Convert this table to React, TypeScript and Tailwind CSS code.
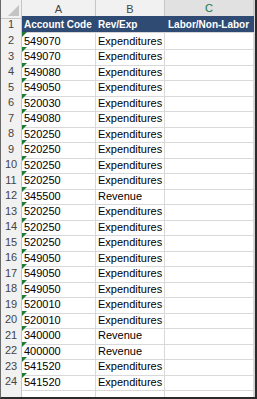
const rows: [string, string][] = [
  ['549070', 'Expenditures'],
  ['549070', 'Expenditures'],
  ['549080', 'Expenditures'],
  ['549050', 'Expenditures'],
  ['520030', 'Expenditures'],
  ['549080', 'Expenditures'],
  ['520250', 'Expenditures'],
  ['520250', 'Expenditures'],
  ['520250', 'Expenditures'],
  ['520250', 'Expenditures'],
  ['345500', 'Revenue'],
  ['520250', 'Expenditures'],
  ['520250', 'Expenditures'],
  ['520250', 'Expenditures'],
  ['549050', 'Expenditures'],
  ['549050', 'Expenditures'],
  ['549050', 'Expenditures'],
  ['520010', 'Expenditures'],
  ['520010', 'Expenditures'],
  ['340000', 'Revenue'],
  ['400000', 'Revenue'],
  ['541520', 'Expenditures'],
  ['541520', 'Expenditures'],
];

const cols = 'grid grid-cols-[21px_74px_69px_89px_1px]';

function RowNum({ n }: { n: number | string }) {
  return (
    <div className="flex items-center justify-center pt-px bg-[#f1f1f1] border-r border-b border-[#c6c6c6] text-[#444] leading-none">
      {n}
    </div>
  );
}

export default function App() {
  return (
    <div
      className="w-[257px] h-[399px] overflow-hidden bg-white border-l border-l-[#6a6a6a] border-r-2 border-b-2 border-[#2b2b2b] flex flex-col text-[11px] text-black"
      style={{ fontFamily: '"Liberation Sans", Arial, sans-serif' }}
    >
      {/* column letters */}
      <div className={`${cols} h-[16px] shrink-0`}>
        <div className="relative bg-[#f1f1f1] border-r border-b border-[#c6c6c6]">
          <svg className="absolute right-[2px] bottom-[2px]" width="11" height="11" viewBox="0 0 11 11">
            <polygon points="11,0 11,11 0,11" fill="#c4c4c4" />
          </svg>
        </div>
        <div className="flex items-center justify-center bg-[#f1f1f1] border-r border-b border-[#c6c6c6] text-[#444]">A</div>
        <div className="flex items-center justify-center bg-[#f1f1f1] border-r border-b border-[#c6c6c6] text-[#444]">B</div>
        <div className="flex items-center justify-center bg-[#e1e1e1] border-r border-[#c6c6c6] border-b-2 border-b-[#217346] text-[#217346]">C</div>
        <div className="bg-[#d4d4d4]" />
      </div>

      {/* header row */}
      <div className={`${cols} h-[15.5px] shrink-0`}>
        <RowNum n={1} />
        <div className="col-span-3 flex items-center pt-px bg-[#2f4b73] border-b border-[#d4d4d4] text-white font-bold text-[10px]">
          <span className="w-[74px] pl-[2px] whitespace-nowrap">Account Code</span>
          <span className="w-[69px] pl-[2px] whitespace-nowrap">Rev/Exp</span>
          <span className="pl-[3px] whitespace-nowrap">Labor/Non-Labor</span>
        </div>
        <div className="bg-[#d4d4d4]" />
      </div>

      {rows.map(([code, type], i) => (
        <div key={i} className={`${cols} h-[15.5px] shrink-0`}>
          <RowNum n={i + 2} />
          <div className="relative flex items-center pt-px pl-[2px] border-r border-b border-[#d9d9d9]">
            <span className="absolute top-0 left-0 w-0 h-0 border-t-[5px] border-t-[#1e7a34] border-r-[5px] border-r-transparent" />
            {code}
          </div>
          <div className="flex items-center pt-px pl-[2px] border-r border-b border-[#d9d9d9]">{type}</div>
          <div className="border-r border-b border-[#d9d9d9]" />
          <div className="bg-[#d4d4d4]" />
        </div>
      ))}

      {/* partial row 25 */}
      <div className={`${cols} flex-1`}>
        <div className="bg-[#f1f1f1] border-r border-[#c6c6c6]" />
        <div className="border-r border-[#d9d9d9]" />
        <div className="border-r border-[#d9d9d9]" />
        <div className="border-r border-[#d9d9d9]" />
        <div className="bg-[#d4d4d4]" />
      </div>
    </div>
  );
}
